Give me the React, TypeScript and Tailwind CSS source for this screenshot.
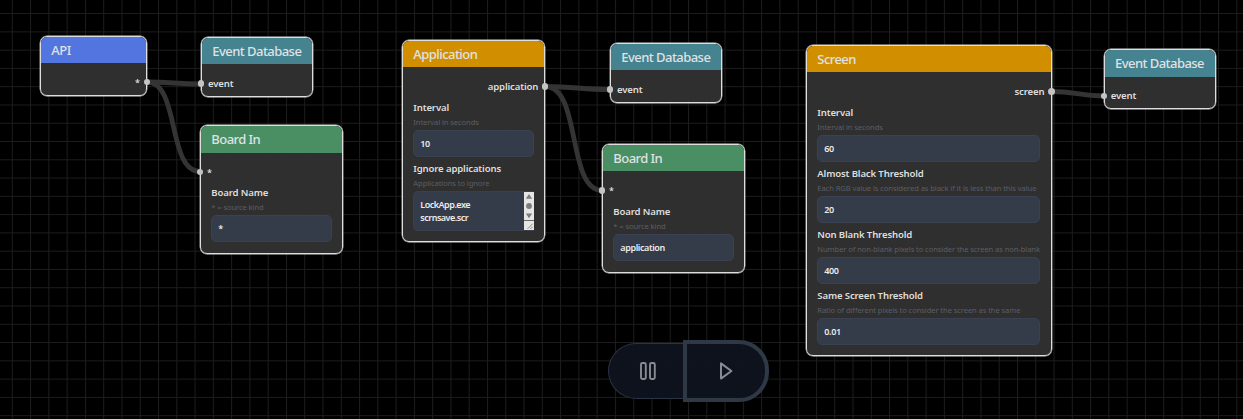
import React from "react";

type Control = { label: string; hint: string; value: string; multiline?: boolean };

type NodeProps = {
  title: string;
  place: string;
  tone: string;
  input?: string;
  output?: string;
  controls?: Control[];
};

const TONES = {
  blue: "bg-[#5375df]",
  teal: "bg-[#468391]",
  green: "bg-[#4a8f64]",
  orange: "bg-[#d18f00]",
};

function Field({ label, hint, value, multiline }: Control) {
  return (
    <div className="px-[10.3px] pb-1">
      <div className="h-[15px] whitespace-nowrap text-[9.6px] font-semibold leading-[15px] tracking-[-0.15px] text-[#dedede]">{label}</div>
      <div className="h-[15px] whitespace-nowrap text-[7.6px] leading-[14px] tracking-[-0.09px] text-[#5b5e66]">{hint}</div>
      {multiline ? (
        <div className="flex h-10 overflow-hidden rounded-l-[5px] border border-r-0 border-[#384050] bg-[#343b49]">
          <div className="flex-1 whitespace-pre pl-1.5 pt-[6px] text-[9px] font-semibold leading-[13px] tracking-[-0.5px] text-[#ebebeb]">{value}</div>
          <Scrollbar />
        </div>
      ) : (
        <div className="flex h-[27px] items-center rounded-[5px] border border-[#3a4252] bg-[#343b49] pl-1.5 text-[9px] font-semibold tracking-[-0.4px] text-[#ebebeb]">
          {value}
        </div>
      )}
    </div>
  );
}

function Scrollbar() {
  return (
    <svg className="-my-px h-10 w-[10px] shrink-0" viewBox="0 0 10 40">
      <rect width="10" height="40" fill="#e6e6e4" />
      <path d="M1.8 7.8 5 3l3.2 4.8ZM1.8 22.4h6.4L5 27.2Z" fill="#7d7d7d" />
      <circle cx="5" cy="15" r="2.9" fill="#7d7d7d" />
      <path d="M0 29.5h10" stroke="#4a4a4a" strokeWidth="0.8" />
      <path d="m3.6 37.8 5-5M6.4 38l2.4-2.4" stroke="#777" strokeWidth="0.8" />
    </svg>
  );
}

function FlowNode({ title, place, tone, input, output, controls = [] }: NodeProps) {
  const socket = output ?? input;
  return (
    <section className={`absolute ${place}`}>
      <div className="h-full overflow-hidden rounded-[7px] border border-[#dedede] bg-[#323232]/95 shadow-[0_0_0_0.4px_#cfcfcf]">
        <h2 className={`h-[26.3px] whitespace-nowrap pl-[10.3px] text-[13px] font-medium leading-[26px] tracking-[-0.55px] text-[#dfe2e4] ${tone}`}>{title}</h2>
        <div
          className={`flex h-[32.7px] items-center px-[6px] pt-[7px] font-semibold text-[#dedede] ${
            socket === "*" ? "text-[9px]" : "text-[9.6px] tracking-[-0.15px]"
          } ${output ? "justify-end" : ""}`}
        >
          {socket}
        </div>
        {controls.map((c) => (
          <Field key={c.label} {...c} />
        ))}
      </div>
      <i className={`absolute top-[43.3px] size-[6.4px] rounded-full bg-[#c4c4c4] ${output ? "-right-[3px]" : "-left-[3px]"}`} />
    </section>
  );
}

const BOARD: Control = { label: "Board Name", hint: "* = source kind", value: "*" };

const NODES: NodeProps[] = [
  { title: "API", tone: TONES.blue, place: "left-[40px] top-[35.5px] w-[107px] h-[60px]", output: "*" },
  { title: "Event Database", tone: TONES.teal, place: "left-[201px] top-[37px] w-[112px] h-[60px]", input: "event" },
  { title: "Board In", tone: TONES.green, place: "left-[200px] top-[125.3px] w-[143.2px] h-[128.7px]", input: "*", controls: [BOARD] },
  {
    title: "Application",
    tone: TONES.orange,
    place: "left-[402px] top-[40px] w-[143.2px] h-[202.3px]",
    output: "application",
    controls: [
      { label: "Interval", hint: "Interval in seconds", value: "10" },
      { label: "Ignore applications", hint: "Applications to ignore", value: "LockApp.exe\nscrnsave.scr", multiline: true },
    ],
  },
  { title: "Event Database", tone: TONES.teal, place: "left-[610px] top-[43px] w-[112px] h-[60px]", input: "event" },
  { title: "Board In", tone: TONES.green, place: "left-[602px] top-[144px] w-[143.2px] h-[128.7px]", input: "*", controls: [{ ...BOARD, value: "application" }] },
  {
    title: "Screen",
    tone: TONES.orange,
    place: "left-[806px] top-[45px] w-[245.5px] h-[311px]",
    output: "screen",
    controls: [
      { label: "Interval", hint: "Interval in seconds", value: "60" },
      { label: "Almost Black Threshold", hint: "Each RGB value is considered as black if it is less than this value", value: "20" },
      { label: "Non Blank Threshold", hint: "Number of non-blank pixels to consider the screen as non-blank", value: "400" },
      { label: "Same Screen Threshold", hint: "Ratio of different pixels to consider the screen as the same", value: "0.01" },
    ],
  },
  { title: "Event Database", tone: TONES.teal, place: "left-[1103.7px] top-[49.4px] w-[112px] h-[60px]", input: "event" },
];

function Wires() {
  return (
    <svg className="absolute inset-0 h-full w-full" viewBox="0 0 1243 419">
      <defs>
        <pattern id="grid" x="11.8" y="13.1" width="18.276" height="18.276" patternUnits="userSpaceOnUse">
          <path d="M0.5 0V18.276M0 0.5H18.276" stroke="#1d1d1d" strokeWidth="1" />
        </pattern>
      </defs>
      <rect width="1243" height="419" fill="url(#grid)" />
      <g fill="none" stroke="#343434" strokeWidth="4.8">
        <path d="M147 82C173 82 175 84 201 84" />
        <path d="M147 82C180 82 167 171.5 200 171.5" />
        <path d="M545.5 86.5C575 86.5 581 89.5 610 89.5" />
        <path d="M545.5 86.5C581 86.5 567 190.3 602 190.3" />
        <path d="M1051.5 91.5C1074 91.5 1081 96 1104 96" />
      </g>
    </svg>
  );
}

export default function App() {
  return (
    <main className="relative h-[419px] w-[1243px] overflow-hidden bg-black font-['Noto_Sans','Open_Sans',sans-serif]">
      <Wires />
      {NODES.map((n) => (
        <FlowNode key={n.place} {...n} />
      ))}
      <div className="absolute left-[608px] top-[340px] flex items-center">
        <button className="flex h-14 w-[75px] items-center justify-center rounded-l-full border border-r-0 border-[#2a3341] bg-[#0f131d]/95 pl-1">
          <svg width="16" height="18" viewBox="0 0 16 18" fill="none" stroke="#878b93" strokeWidth="1.9">
            <rect x="1" y="1" width="4.8" height="16" rx="1.4" />
            <rect x="10" y="1" width="4.8" height="16" rx="1.4" />
          </svg>
        </button>
        <button className="flex h-[62px] w-[86px] items-center justify-center rounded-r-[30px] border-4 border-[#2f3845] bg-[#0f131d]/95">
          <svg width="14" height="18" viewBox="0 0 14 18" fill="none" stroke="#878b93" strokeWidth="2" strokeLinejoin="round">
            <path d="M2 1.4v15.2L12.4 9Z" />
          </svg>
        </button>
      </div>
    </main>
  );
}
